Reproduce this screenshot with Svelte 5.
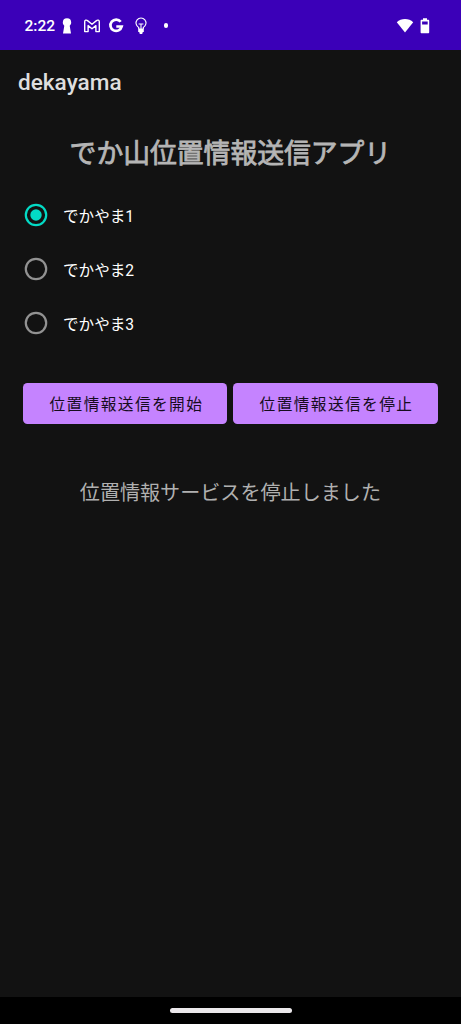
<script>
  const options = ['でかやま1', 'でかやま2', 'でかやま3'];
  let selected = $state(0);
  let status = $state('位置情報サービスを停止しました');
</script>

<div class="screen">
  <header class="statusbar">
    <span class="clock">2:22</span>
    <svg class="keyhole" width="10" height="16" viewBox="0 0 10 16"><path fill="#fff" d="M5 .2a4.3 4.3 0 0 0-4.2 4.3c0 1.3.6 2.5 1.5 3.2L1 15.6h8L7.7 7.7c.9-.7 1.5-1.9 1.5-3.2A4.3 4.3 0 0 0 5 .2Z" /></svg>
    <svg class="mail" width="18" height="14" viewBox="0 0 18 14"><path fill="none" stroke="#fff" stroke-width="1.4" stroke-linejoin="round" d="M1.7 12.6V2.8C1.7 1 3.4.7 4.5 1.6L9 5.2l4.5-3.6c1.1-.9 2.8-.6 2.8 1.2v9.8h-3.4V6.6L9 9.7 5.1 6.6v6Z" /></svg>
    <svg class="google" width="16" height="16" viewBox="0 0 16 16"><path fill="none" stroke="#fff" stroke-width="2.7" d="M12.7 3.8A5.7 5.7 0 1 0 13.7 8.5H8.3" /></svg>
    <svg class="bulb" width="12" height="18" viewBox="0 0 12 18"><path fill="none" stroke="#fff" stroke-width="1.1" d="M3.7 12V10.4A5 5 0 1 1 8.3 10.4V12M3.6 7h4.8M6 7V12" /><path fill="#fff" d="M3.2 11.4h5.6v3.6H7.8L7.2 17H4.8L4.2 15h-1Z" /></svg>
    <span class="dot"></span>
    <svg class="wifi" width="18" height="16" viewBox="0 0 18 16"><path fill="#fff" d="M9 14.4.8 4.2C3 1.9 5.8.9 9 .9s6 1 8.2 3.3Z" /></svg>
    <svg class="battery" width="10" height="16" viewBox="0 0 10 16"><path fill="#fff" fill-rule="evenodd" d="M3 .3h4v1.4h1.2c.6 0 1 .4 1 1v11.5c0 .6-.4 1-1 1H1.6c-.6 0-1-.4-1-1V2.7c0-.6.4-1 1-1H3ZM2.1 3.5v2.9h5.6V3.5Z" /></svg>
  </header>

  <div class="appbar">dekayama</div>

  <main>
    <h1>でか山位置情報送信アプリ</h1>
    <div class="options">
      {#each options as label, i}
        <label>
          <input type="radio" name="unit" value={i} bind:group={selected} />
          <svg class:checked={selected === i} width="24" height="24" viewBox="0 0 24 24">
            <circle cx="12" cy="12" r="10.2" />
            {#if selected === i}<circle class="inner" cx="12" cy="12" r="5.7" />{/if}
          </svg>
          <span>{label}</span>
        </label>
      {/each}
    </div>
    <div class="buttons">
      <button onclick={() => (status = '位置情報サービスを開始しました')}>位置情報送信を開始</button>
      <button onclick={() => (status = '位置情報サービスを停止しました')}>位置情報送信を停止</button>
    </div>
    <p>{status}</p>
  </main>

  <footer><span></span></footer>
</div>

<style>
  .screen {
    display: flex;
    flex-direction: column;
    width: 461px;
    height: 1024px;
    overflow: hidden;
    background: #121212;
    font-family: Roboto, "Noto Sans CJK JP", sans-serif;
  }
  .statusbar {
    display: flex;
    align-items: center;
    flex: none;
    box-sizing: border-box;
    height: 50.4px;
    padding: 1px 31px 0 24.5px;
    background: #3b00b8;
    color: #fff;
  }
  .statusbar svg { display: block; flex: none; }
  .clock { width: 30.5px; font-size: 15.5px; font-weight: 500; line-height: 18px; white-space: nowrap; }
  .keyhole { margin-left: 7px; }
  .mail { margin-left: 11px; }
  .google { margin-left: 7px; }
  .bulb { margin-left: 11px; }
  .dot { width: 4.6px; height: 4.6px; margin-left: 16.5px; border-radius: 50%; background: #fff; }
  .wifi { margin-left: auto; }
  .battery { margin-left: 6px; }
  .appbar {
    flex: none;
    height: 62.6px;
    padding-left: 18px;
    color: #dedede;
    font-size: 22.6px;
    font-weight: 500;
    line-height: 65px;
  }
  main { flex: 1; padding: 0 23.5px 0 23.3px; }
  h1 {
    margin: 20.6px -20px 0;
    color: #b5b5b5;
    font-size: 26.8px;
    font-weight: 400;
    line-height: 40px;
    text-align: center;
    white-space: nowrap;
    -webkit-text-stroke: 0.8px #b5b5b5;
  }
  .options { margin-top: 14.9px; }
  label { display: flex; align-items: center; height: 53.9px; color: #fff; font-size: 15.6px; }
  label svg { display: block; margin-left: .5px; fill: none; stroke: #929292; stroke-width: 2.2; }
  label .checked { stroke: #03dac5; }
  label .inner { fill: #03dac5; stroke: none; }
  label span { margin-left: 15.2px; }
  input { position: absolute; opacity: 0; pointer-events: none; }
  .buttons { display: flex; gap: 6px; margin-top: 32.9px; }
  button {
    flex: 1;
    height: 41px;
    padding: 0 0 0 2px;
    border: 0;
    border-radius: 4.5px;
    background: #c583ff;
    color: #160c1e;
    font: inherit;
    font-size: 15.7px;
    letter-spacing: 1.4px;
    white-space: nowrap;
  }
  p {
    margin: 53.5px 0 0;
    color: #b0b0b0;
    font-size: 20.08px;
    line-height: 30px;
    text-align: center;
    white-space: nowrap;
  }
  footer { display: flex; flex: none; justify-content: center; height: 27px; background: #000; }
  footer span { width: 122px; height: 5px; margin-top: 11px; border-radius: 3px; background: #ebe8eb; }
</style>
